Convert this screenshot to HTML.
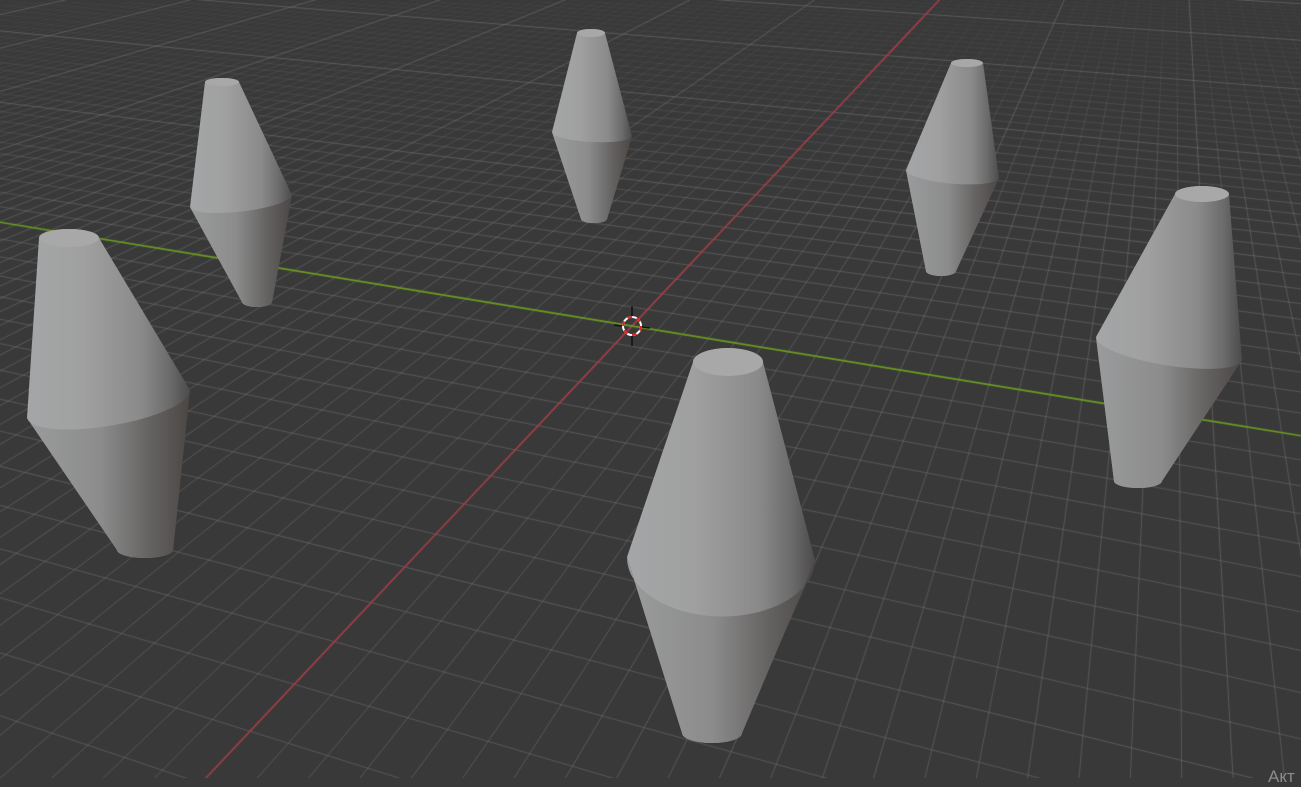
<!DOCTYPE html>
<html><head><meta charset="utf-8">
<style>
html,body{margin:0;padding:0;background:#393939;overflow:hidden}
#c{position:absolute;left:0;top:0}
#s{position:absolute;left:0;top:0}
.t{position:absolute;left:1268px;top:767px;font:17px "Liberation Sans","DejaVu Sans",sans-serif;color:#8c8c8c}
</style></head><body>
<canvas id="c" width="1301" height="778"></canvas>
<svg id="s" width="1301" height="778" viewBox="0 0 1301 778">
<defs>
<linearGradient id="gu" x1="0" y1="0" x2="1" y2="0">
<stop offset="0" stop-color="#a4a6a7"/><stop offset="0.35" stop-color="#a0a0a0"/>
<stop offset="0.7" stop-color="#8a8a8a"/><stop offset="0.88" stop-color="#6a6a6a"/><stop offset="1" stop-color="#4c4a4a"/>
</linearGradient>
<linearGradient id="gl" x1="0" y1="0" x2="1" y2="0">
<stop offset="0" stop-color="#9a9b9c"/><stop offset="0.45" stop-color="#8c8c8c"/>
<stop offset="0.75" stop-color="#656362"/><stop offset="1" stop-color="#4a4644"/>
</linearGradient>
</defs>
<g id="objs"></g>
<g>
<line x1="632" y1="306" x2="632" y2="318" stroke="#111" stroke-width="1.5"/>
<line x1="632" y1="334" x2="632" y2="346" stroke="#111" stroke-width="1.5"/>
<line x1="614" y1="325" x2="622" y2="326" stroke="#111" stroke-width="1.5"/>
<line x1="642" y1="327" x2="650" y2="328" stroke="#111" stroke-width="1.5"/>
<circle cx="632" cy="326" r="9" fill="none" stroke="#fff" stroke-width="2"/>
<circle cx="632" cy="326" r="9" fill="none" stroke="#d22" stroke-width="2" stroke-dasharray="4.7 4.7"/>
</g>
</svg>
<div class="t">Акт</div>
<script>
(function(){
var cv=document.getElementById('c'),g=cv.getContext('2d');
g.fillStyle='#393939';g.fillRect(0,0,1301,778);
var Vr=[1175,-250],Vg=[-2878,-250],O=[632,326],a=0.0295,b=0.0071;
function P(u,v){var d=a*u+b*v+1;return [(a*u*Vr[0]+b*v*Vg[0]+O[0])/d,(a*u*Vr[1]+b*v*Vg[1]+O[1])/d,d];}
function drawLine(fixU,k,major,color,width){
  var c1=fixU?a*k:b*k, cp=fixU?b:a;
  var N=60;
  var prev=null;
  for(var i=0;i<=N;i++){
    var d=0.3+ (25-0.3)*Math.pow(i/N,2);
    var t=(d-1-c1)/cp;
    var p=fixU?P(k,t):P(t,k);
    if(prev){
      var dm=(prev[2]+p[2])/2;
      var s=20/(dm*dm);
      var al;
      if(color){al=1;}
      else if(major){al=0.55;}
      else{al=Math.max(0,Math.min(1,(s-3)/10))*0.45+0.05; if(s<3)al=Math.max(0,0.05*(s-1.5)/1.5);}
      if(al>0.005){
        g.strokeStyle=color||('rgba(120,120,120,'+al.toFixed(3)+')');
        g.lineWidth=width||1;
        g.beginPath();g.moveTo(prev[0],prev[1]);g.lineTo(p[0],p[1]);g.stroke();
      }
    }
    prev=p;
  }
}
for(var u=-150;u<=900;u++){if(u!==0)drawLine(true,u,u%10===0);}
for(var v=-400;v<=3500;v++){if(v!==0)drawLine(false,v,v%10===0);}
drawLine(false,0,true,'#a33e4a',1.6);
drawLine(true,0,true,'#6c9c22',1.6);

var objs=[
 {t:[222,82,17,4],mL:[190,207],mR:[292,195],mry:11,b:[257,302,15,5]},
 {t:[591,33,14,4],mL:[552,132],mR:[632,136],mry:8,b:[594,219,13,4]},
 {t:[967,63,16,4],mL:[906,170],mR:[999,178],mry:10,b:[941,271,15,5]},
 {t:[1202,194,27,8],mL:[1096,337],mR:[1242,360],mry:17,b:[1138,481,24,7]},
 {t:[69,238,30,9],mL:[27,418],mR:[190,390],mry:22,b:[145,550,28,8]},
 {t:[728,362,35,14],mL:[627,557],mR:[815,560],mry:58,b:[712,733,30,10]}
];
var h='';
objs.forEach(function(o){
 var t=o.t,b2=o.b;
 var tL=[t[0]-t[2],t[1]],tR=[t[0]+t[2],t[1]];
 var bL=[b2[0]-b2[2],b2[1]],bR=[b2[0]+b2[2],b2[1]];
 var mL=o.mL,mR=o.mR;
 var mrx=Math.hypot(mR[0]-mL[0],mR[1]-mL[1])/2;
 var rot=Math.atan2(mR[1]-mL[1],mR[0]-mL[0])*180/Math.PI;
 function pt(p){return p[0].toFixed(1)+' '+p[1].toFixed(1);}
 var sil='M'+pt(tL)+' L'+pt(mL)+' L'+pt(bL)+' A'+b2[2]+' '+b2[3]+' 0 0 0 '+pt(bR)+' L'+pt(mR)+' L'+pt(tR)+' A'+t[2]+' '+t[3]+' 0 0 0 '+pt(tL)+'Z';
 var low='M'+pt(mL)+' L'+pt(bL)+' A'+b2[2]+' '+b2[3]+' 0 0 0 '+pt(bR)+' L'+pt(mR)+' A'+mrx.toFixed(1)+' '+o.mry+' '+rot.toFixed(1)+' 0 1 '+pt(mL)+'Z';
 h+='<path d="'+sil+'" fill="url(#gu)"/>';
 h+='<path d="'+low+'" fill="url(#gl)"/>';
 h+='<ellipse cx="'+t[0]+'" cy="'+t[1]+'" rx="'+t[2]+'" ry="'+t[3]+'" fill="#a8a8a8"/>';
});
document.getElementById('objs').innerHTML=h;
})();
</script>
</body></html>
